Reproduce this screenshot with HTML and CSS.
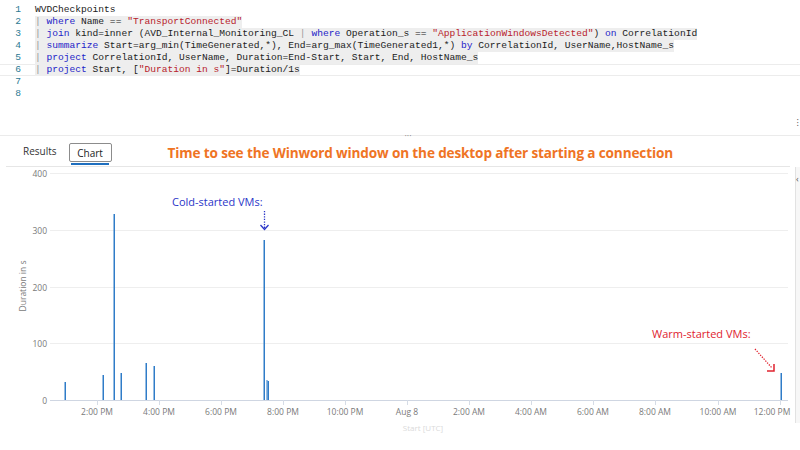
FILE: index.html
```html
<!DOCTYPE html>
<html>
<head>
<meta charset="utf-8">
<link rel="stylesheet" href="styles.css">
</head>
<body>
<div class="editor">
  <div class="line"><span class="ln">1</span><span class="code">WVDCheckpoints</span></div>
  <div class="line"><span class="ln">2</span><span class="code sel"><span class="p">|</span> <span class="k">where</span> Name == <span class="s">"TransportConnected"</span></span></div>
  <div class="line"><span class="ln">3</span><span class="code sel"><span class="p">|</span> <span class="k">join</span> kind=inner (AVD_Internal_Monitoring_CL <span class="p">|</span> <span class="k">where</span> Operation_s == <span class="s">"ApplicationWindowsDetected"</span>) <span class="k">on</span> CorrelationId</span></div>
  <div class="line"><span class="ln">4</span><span class="code sel"><span class="p">|</span> <span class="k">summarize</span> Start=arg_min(TimeGenerated,*), End=arg_max(TimeGenerated1,*) <span class="k">by</span> CorrelationId, UserName,HostName_s</span></div>
  <div class="line"><span class="ln">5</span><span class="code sel"><span class="p">|</span> <span class="k">project</span> CorrelationId, UserName, Duration=End-Start, Start, End, HostName_s</span></div>
  <div class="line current"><span class="ln">6</span><span class="code sel"><span class="p">|</span> <span class="k">project</span> Start, [<span class="s">"Duration in s"</span>]=Duration/1s</span></div>
  <div class="line"><span class="ln">7</span><span class="code"></span></div>
  <div class="line"><span class="ln">8</span><span class="code"></span></div>
  <span class="corner-icon">⁝</span>
</div>
<div class="splitter"><span class="grip">···</span></div>
<div class="tabs">
  <span class="tab">Results</span>
  <span class="tab active">Chart</span>
  <span class="title">Time to see the Winword window on the desktop after starting a connection</span>
</div>
<div class="chart-row">
  <svg class="chart" width="792" height="268" viewBox="0 167 792 268">
    <g class="grid">
      <line x1="50" y1="173.5" x2="788" y2="173.5"/>
      <line x1="50" y1="230.5" x2="788" y2="230.5"/>
      <line x1="50" y1="287.5" x2="788" y2="287.5"/>
      <line x1="50" y1="343.5" x2="788" y2="343.5"/>
    </g>
    <line class="baseline" x1="50" y1="400.5" x2="788" y2="400.5"/>
    <g class="ticks">
      <line x1="97.5" y1="400" x2="97.5" y2="405"/>
      <line x1="159.5" y1="400" x2="159.5" y2="405"/>
      <line x1="221.5" y1="400" x2="221.5" y2="405"/>
      <line x1="283.5" y1="400" x2="283.5" y2="405"/>
      <line x1="345.5" y1="400" x2="345.5" y2="405"/>
      <line x1="407.5" y1="400" x2="407.5" y2="405"/>
      <line x1="469.5" y1="400" x2="469.5" y2="405"/>
      <line x1="531.5" y1="400" x2="531.5" y2="405"/>
      <line x1="593.5" y1="400" x2="593.5" y2="405"/>
      <line x1="655.5" y1="400" x2="655.5" y2="405"/>
      <line x1="718.5" y1="400" x2="718.5" y2="405"/>
      <line x1="780.5" y1="400" x2="780.5" y2="405"/>
    </g>
    <g class="ylab">
      <text x="47" y="176.5">400</text>
      <text x="47" y="233.5">300</text>
      <text x="47" y="290.5">200</text>
      <text x="47" y="346.5">100</text>
      <text x="47" y="403.5">0</text>
    </g>
    <g class="xlab">
      <text x="97" y="415">2:00 PM</text>
      <text x="159" y="415">4:00 PM</text>
      <text x="221" y="415">6:00 PM</text>
      <text x="283" y="415">8:00 PM</text>
      <text x="345" y="415">10:00 PM</text>
      <text x="407" y="415">Aug 8</text>
      <text x="469" y="415">2:00 AM</text>
      <text x="531" y="415">4:00 AM</text>
      <text x="593" y="415">6:00 AM</text>
      <text x="655" y="415">8:00 AM</text>
      <text x="718" y="415">10:00 AM</text>
      <text x="772" y="415">12:00 PM</text>
    </g>
    <text class="ytitle" transform="translate(26 286) rotate(-90)">Duration in s</text>
    <text class="xtitle" x="423" y="431">Start [UTC]</text>
    <g class="bars">
      <rect x="64.5" y="382" width="1.5" height="18"/>
      <rect x="102.5" y="375" width="1.5" height="25"/>
      <rect x="113.5" y="214" width="1.5" height="186"/>
      <rect x="120.5" y="373" width="1.5" height="27"/>
      <rect x="145.5" y="363" width="1.5" height="37"/>
      <rect x="153.5" y="366" width="1.5" height="34"/>
      <rect x="263.5" y="240" width="1.5" height="160"/>
      <rect x="266.5" y="380" width="1" height="20"/>
      <rect x="267.5" y="381" width="1.5" height="19"/>
      <rect x="780.5" y="373" width="1.5" height="27"/>
    </g>
    <text class="cold" x="172" y="206">Cold-started VMs:</text>
    <line class="cold-arrow" x1="264.5" y1="211" x2="264.5" y2="228"/>
    <polyline class="cold-head" points="260.5,225 264.5,229.5 268.5,225"/>
    <text class="warm" x="652" y="338">Warm-started VMs:</text>
    <line class="warm-arrow" x1="755" y1="349" x2="772" y2="368"/>
    <polyline class="warm-head" points="767,371 774,371 774,364"/>
  </svg>
  <div class="vstrip"><span class="vicon">‹</span></div>
</div>
</body>
</html>
```
FILE: styles.css
```css
html, body {
  margin: 0;
  padding: 0;
  background: #ffffff;
}
body {
  width: 800px;
  height: 450px;
  overflow: hidden;
  font-family: "Open Sans", "Noto Sans", sans-serif;
}
.editor {
  height: 135px;
  padding-top: 4px;
  box-sizing: border-box;
  position: relative;
}
.line {
  display: flex;
  height: 12px;
  line-height: 12px;
  font-family: "Liberation Mono", "DejaVu Sans Mono", monospace;
  font-size: 9.6px;
  color: #222;
  white-space: pre;
}
.line.current {
  box-shadow: inset 0 1px #ececec, inset 0 -1px #ececec;
}
.ln {
  width: 21px;
  text-align: right;
  color: #2b7a93;
  margin-right: 14px;
}
.code.sel {
  background: #eeeeee;
}
.k { color: #2323c8; }
.s { color: #b8222c; }
.p { color: #9a9a9a; }
.corner-icon {
  position: absolute;
  right: 1px;
  top: 116px;
  font-size: 9px;
  color: #555;
}
.splitter {
  height: 1px;
  background: #ebebeb;
  display: flex;
  justify-content: center;
  align-items: center;
}
.grip {
  margin-left: 16px;
  font-size: 9px;
  line-height: 0;
  color: #8a8a8a;
  letter-spacing: 0px;
}
.tabs {
  height: 30px;
  margin: 0 10px 0 6px;
  padding-left: 17px;
  border-bottom: 1px solid #e6e6e6;
  display: flex;
  align-items: center;
}
.tab {
  font-size: 10px;
  color: #333;
}
.tab.active {
  position: relative;
  margin-left: 12px;
  width: 43px;
  height: 19px;
  box-sizing: border-box;
  border: 1px solid #8c8c8c;
  border-radius: 2px;
  display: flex;
  align-items: center;
  justify-content: center;
  margin-top: 3px;
  color: #222;
}
.tab.active::after {
  content: "";
  position: absolute;
  left: 1px;
  bottom: -4px;
  width: 38px;
  height: 2px;
  background: #1f6fbf;
}
.title {
  margin-left: 56px;
  margin-top: 3px;
  font-size: 13.6px;
  font-weight: 700;
  color: #ef7424;
  letter-spacing: -0.15px;
}
.chart-row {
  display: flex;
}
.chart {
  display: block;
  font-family: "Open Sans", "Noto Sans", sans-serif;
}
.grid line {
  stroke: #eeeeee;
  stroke-width: 1;
}
.baseline {
  stroke: #cfd6e2;
  stroke-width: 1;
}
.ticks line {
  stroke: #d6dce6;
  stroke-width: 1;
}
.ylab text {
  font-size: 8.5px;
  fill: #7a7a7a;
  text-anchor: end;
}
.xlab text {
  font-size: 8.5px;
  fill: #7a7a7a;
  text-anchor: middle;
}
.ytitle {
  font-size: 8.5px;
  fill: #7a7a7a;
  text-anchor: middle;
}
.xtitle {
  font-size: 8px;
  fill: #dadada;
  text-anchor: middle;
}
.bars rect {
  fill: #2f7cc8;
}
.cold {
  font-size: 11px;
  fill: #2a36c8;
}
.cold-arrow {
  stroke: #2a36c8;
  stroke-width: 1.3;
  stroke-dasharray: 1.3 1.3;
}
.cold-head {
  fill: none;
  stroke: #2a36c8;
  stroke-width: 1.3;
}
.warm {
  font-size: 11px;
  fill: #e0232f;
}
.warm-arrow {
  stroke: #e0232f;
  stroke-width: 1.3;
  stroke-dasharray: 1.3 1.3;
}
.warm-head {
  fill: none;
  stroke: #e0232f;
  stroke-width: 1.5;
}
.vstrip {
  width: 4px;
  height: 256px;
  margin-left: 3px;
  border-left: 1px solid #e2e2e2;
  background: #f7f7f7;
  position: relative;
}
.vicon {
  position: absolute;
  left: 0;
  top: 7px;
  font-size: 9px;
  line-height: 9px;
  color: #555;
}
```
